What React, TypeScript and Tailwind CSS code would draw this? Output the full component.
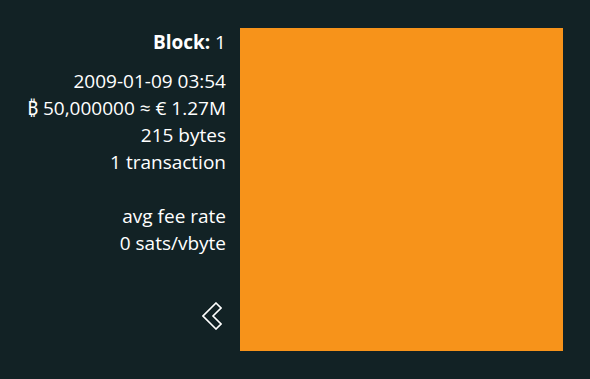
export default function App() {
  return (
    <div
      className="w-[590px] h-[379px] bg-[#122225] text-white overflow-hidden"
      style={{ fontFamily: '"Open Sans", "Noto Sans", sans-serif' }}
    >
      <div className="flex pt-[28px] pl-[16px]">
        <div className="w-[210px] h-[323px] flex flex-col items-end text-right text-[19px] leading-[27px]">
          <div className="mt-[1px]">
            <span className="font-bold">Block:</span> 1
          </div>
          <div className="mt-[12px]">2009-01-09 03:54</div>
          <div className="whitespace-nowrap">₿ 50,000000 ≈ € 1.27M</div>
          <div>215 bytes</div>
          <div>1 transaction</div>
          <div className="h-[27px]" />
          <div>avg fee rate</div>
          <div>0 sats/vbyte</div>
          <div className="mt-auto mb-[21px] mr-[4px]">
            <svg width="20" height="28" viewBox="0 0 20 28" fill="none">
              <polygon
                points="12,1 17,6 9,14 17,22 12,27 -1,14"
                transform="translate(2 0)"
                stroke="#ffffff"
                strokeWidth="1.6"
                strokeLinejoin="miter"
              />
            </svg>
          </div>
        </div>
        <div className="ml-[14px] w-[323px] h-[323px] bg-[#f7931a]" />
      </div>
    </div>
  );
}
